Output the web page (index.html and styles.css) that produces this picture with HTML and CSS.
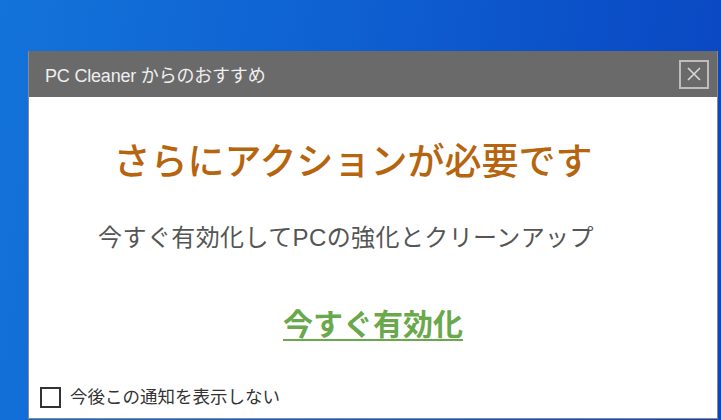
FILE: index.html
```html
<!DOCTYPE html>
<html lang="ja">
<head>
<meta charset="utf-8">
<title>PC Cleaner</title>
<link rel="stylesheet" href="styles.css">
</head>
<body>
<div class="desktop">
  <div class="dialog">
    <div class="titlebar">
      <span class="title">PC Cleaner からのおすすめ</span>
      <button class="close" aria-label="閉じる">
        <svg width="16" height="16" viewBox="0 0 16 16"><path d="M2 2 L14 14 M14 2 L2 14" stroke="#d8d8d8" stroke-width="1.6" fill="none"/></svg>
      </button>
    </div>
    <div class="content">
      <h1 class="heading">さらにアクションが必要です</h1>
      <p class="subtitle">今すぐ有効化してPCの強化とクリーンアップ</p>
      <a class="activate" href="#">今すぐ有効化</a>
      <label class="optout"><span class="box"></span><span class="optout-text">今後この通知を表示しない</span></label>
    </div>
  </div>
</div>
</body>
</html>
```
FILE: styles.css
```css
html, body {
  margin: 0;
  padding: 0;
}
body {
  width: 721px;
  height: 420px;
  overflow: hidden;
  font-family: "Liberation Sans", "Noto Sans CJK JP", sans-serif;
}
.desktop {
  width: 721px;
  height: 420px;
  box-sizing: border-box;
  padding: 51px 0 0 28px;
  background: linear-gradient(100deg, #1373da 0%, #0f62d2 40%, #0b50c8 75%, #0a45c0 100%);
}
.dialog {
  width: 690px;
  height: 368px;
  box-sizing: border-box;
  border: 1px solid #8a8a8a;
  border-top: none;
  background: #ffffff;
  display: flex;
  flex-direction: column;
}
.titlebar {
  height: 46px;
  background: #6a6a6a;
  display: flex;
  align-items: center;
  justify-content: space-between;
  padding: 0 8px 0 16px;
  flex-shrink: 0;
}
.title {
  color: #efefef;
  font-size: 18px;
  letter-spacing: -0.2px;
}
.close {
  width: 30px;
  height: 29px;
  box-sizing: border-box;
  border: 2px solid #bdbdbd;
  background: transparent;
  padding: 0;
  display: flex;
  align-items: center;
  justify-content: center;
}
.content {
  flex: 1;
  display: flex;
  flex-direction: column;
  align-items: center;
}
.heading {
  margin: 44px 0 0 0;
  font-size: 37px;
  line-height: 44px;
  font-weight: 500;
  color: #b6640e;
  padding-right: 40px;
}
.subtitle {
  margin: 38px 0 0 0;
  font-size: 24px;
  letter-spacing: 0.4px;
  line-height: 30px;
  color: #555555;
  padding-right: 54px;
}
.activate {
  margin-top: 54px;
  font-size: 30px;
  line-height: 36px;
  font-weight: 700;
  color: #6aa84c;
  text-decoration: underline;
  text-decoration-thickness: 2px;
  text-underline-offset: 4px;
}
.optout {
  margin-top: auto;
  align-self: flex-start;
  display: flex;
  align-items: center;
  gap: 9px;
  padding: 0 0 10px 11px;
}
.box {
  width: 21px;
  height: 21px;
  box-sizing: border-box;
  border: 2px solid #333333;
  background: #ffffff;
}
.optout-text {
  font-size: 17.5px;
  color: #333333;
  line-height: 22px;
}
```
